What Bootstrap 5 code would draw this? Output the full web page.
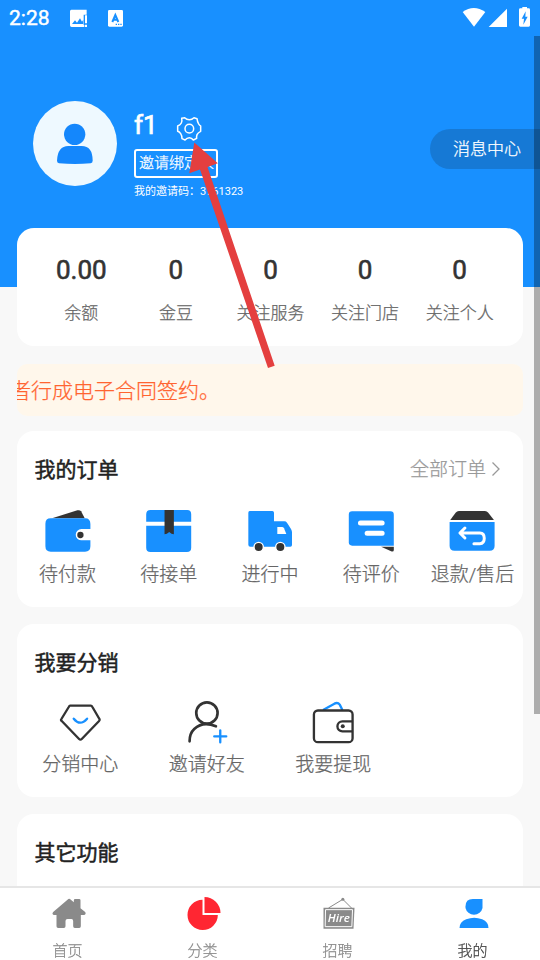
<!DOCTYPE html>
<html lang="zh-CN">
<head>
<meta charset="utf-8">
<meta name="viewport" content="width=device-width, initial-scale=1">
<title>我的</title>
<link href="https://cdn.jsdelivr.net/npm/bootstrap@5.3.0/dist/css/bootstrap.min.css" rel="stylesheet">
<style>
body{font-family:Roboto,"Noto Sans CJK SC",sans-serif;background:#f8f8f8;color:#666;font-weight:300;-webkit-text-stroke:.25px currentColor}
svg{display:block;flex:none}
.app{height:960px;width:540px}
.status{height:36px;padding:0 9px 0 9px;background:#1890ff;font-size:21px;font-weight:400;-webkit-text-stroke-width:.45px;line-height:38px}
.hero{height:251px;background:#1890ff;padding:65px 0 0 33px}
.who{margin-left:17px;padding-top:8px}
.nick{font-size:26px;line-height:32px;font-weight:400;-webkit-text-stroke-width:.7px;width:41.5px}
.gear{margin-top:7px}
.bind{width:84px;height:29px;border:2px solid #fff;border-radius:3px;font-size:15px;line-height:25px;margin-top:7px;padding-left:3px}
.code{font-size:11px;line-height:16px;margin-top:6px;font-weight:400;-webkit-text-stroke-width:0}
.msg{width:110px;height:40px;margin-top:28px;border-radius:20px 0 0 20px;background:rgba(20,60,100,.27);font-size:17px;line-height:41px;padding-left:23px}
.sheet{margin:0 17px;gap:17px}
.panel{background:#fff;border-radius:17px}
.stats{height:118px;margin-top:-59px;padding:24px 16px 0 17px}
.num{font-size:26px;line-height:36px;font-weight:400;-webkit-text-stroke-width:.6px;color:#333}
.cap{font-size:17px;line-height:24px;margin-top:13px}
.notice{height:52px;margin-top:1px;margin-bottom:-2px;border-radius:10px;background:#fff7eb;color:#ff6430;font-size:21px;line-height:54px;text-indent:-7px}
.orders{height:176px}
.share{height:173px}
.more{height:120px}
.ttl{font-size:21px;line-height:30px;font-weight:400;-webkit-text-stroke-width:.5px;color:#222}
.top-row{padding:24px 22px 0 17.5px}
.all{font-size:19px;line-height:30px;color:#999}
.icons-a{margin-top:20px}
.icons-a .lab{margin-top:10px}
.icons-b{margin-top:22px}
.icons-b .lab{margin-top:5px}
.lab{font-size:19px;line-height:24px}
.tabs{height:74px;border-top:2px solid #e6e6e6;font-size:15px;line-height:22px;color:#8a8a8a;padding-top:5px}
.tabs .lbl{margin-top:7px}
.tabs .on{color:#444}
.bar{right:0;top:36px;width:6px;height:678px;background:rgba(0,0,0,.3)}
</style>
</head>
<body>
<div class="app position-relative overflow-hidden d-flex flex-column">
  <header class="status d-flex align-items-center text-white flex-shrink-0">
    <span>2:28</span>
    <svg class="ms-3" width="24" height="20" viewBox="198 24 72 60"><path fill="#fff" d="M214 29h46v15h-9v31h2v6h-38q-5 0-5-5V34q0-5 4-5z"/><path fill="#1890ff" d="M216 72l9-11 6 7 9-13 6 10 4-6v13z"/><path fill="#fff" d="M255 46h6v24h-6zM255 74h6v7h-6z"/></svg>
    <svg class="ms-3" width="18" height="20" viewBox="306 24 54 60"><rect x="312" y="30" width="45" height="50" rx="4" fill="#fff"/><path d="M325 66l9-21 9 21M328 59h12" fill="none" stroke="#1890ff" stroke-width="6"/><path d="M335 73h4m3 0h4m3 0h4" stroke="#1890ff" stroke-width="4"/></svg>
    <svg class="ms-auto" width="69" height="24" viewBox="66 18 207 72"><g fill="#fff"><path d="M68 36Q101 12 136 36L102 80z"/><path d="M201 26v55h-55z"/><path d="M241 25h6v-4h14v4h5q4 0 4 4v47q0 4-4 4h-25q-4 0-4-4V29q0-4 4-4z"/></g><path fill="#1890ff" d="M257 34l-12 22h7l-2 18 13-24h-7z"/></svg>
  </header>

  <section class="hero d-flex align-items-start text-white flex-shrink-0">
    <svg width="84" height="85" viewBox="39 33 252 255"><ellipse cx="165" cy="160.500" rx="126" ry="127.500" fill="#eef9ff"/><g fill="#1487fc"><circle cx="164" cy="133" r="32"/><path d="M145 168h40q33 0 33 44 0 7-6 8-47 4-95 0-6-1-6-8 2-44 34-44z"/></g></svg>
    <div class="who">
      <div class="d-flex">
        <div class="nick">f1</div>
        <svg class="gear" width="26" height="26" viewBox="466 80 78 78" fill="none" stroke="#fff" stroke-width="4.500" stroke-linejoin="round"><path d="M483 87L492 85Q498 91 506 91Q514 91 520 85L529 88Q530 97 534 104Q537 109 540 110V126Q532 130 529 136Q527 142 528 147L518 152Q513 145 506 145Q499 145 493 152L484 148Q484 139 480 133Q476 127 471 126V110Q479 107 482 101Q485 95 483 87Z"/><circle cx="506" cy="118" r="13"/></svg>
      </div>
      <div class="bind text-nowrap">邀请绑定人</div>
      <div class="code">我的邀请码：3761323</div>
    </div>
    <div class="msg ms-auto">消息中心</div>
  </section>

  <main class="sheet d-flex flex-column flex-grow-1">
    <section class="panel stats d-flex text-center flex-shrink-0">
      <div class="col"><div class="num">0.00</div><div class="cap">余额</div></div>
      <div class="col"><div class="num">0</div><div class="cap">金豆</div></div>
      <div class="col"><div class="num">0</div><div class="cap">关注服务</div></div>
      <div class="col"><div class="num">0</div><div class="cap">关注门店</div></div>
      <div class="col"><div class="num">0</div><div class="cap">关注个人</div></div>
    </section>

    <div class="notice overflow-hidden text-nowrap flex-shrink-0">者行成电子合同签约。</div>

    <section class="panel orders flex-shrink-0">
      <div class="top-row d-flex justify-content-between">
        <div class="ttl">我的订单</div>
        <div class="all d-flex align-items-center">全部订单<svg width="15" height="20" viewBox="-3 1 15 20"><path d="M3.500 3.500l6.500 6.500-6.500 6.500" fill="none" stroke="#999" stroke-width="1.300"/></svg></div>
      </div>
      <div class="d-flex text-center icons-a">
        <div class="col d-flex flex-column align-items-center">
          <svg width="48" height="48" viewBox="130.800 225 144 144"><path fill="#333" d="M155 265l76-24q7-2 11 3l11 21z"/><path fill="#1890ff" d="M151 265h103q16 0 16 17v15h-27a17 17 0 0 0 0 34h27v18q0 16-16 16H151q-16 0-16-16v-68q0-16 16-16z"/><circle cx="240" cy="315" r="9.500" fill="#333"/></svg>
          <div class="lab">待付款</div></div>
        <div class="col d-flex flex-column align-items-center">
          <svg width="48" height="48" viewBox="434.400 225 144 144"><path fill="#1890ff" d="M451 240h110q12 0 12 13v22H438v-22q0-13 13-13zM438 287h135v66q0 13-13 13H451q-13 0-13-13z"/><path fill="#333" d="M493 240h28v73q-7 0-14-7-7 7-14 7z"/></svg>
          <div class="lab">待接单</div></div>
        <div class="col d-flex flex-column align-items-center">
          <svg width="48" height="48" viewBox="-72 225 144 144"><path fill="#1890ff" d="M-61 243H7q5 0 5 5v26h31q5 0 8 4l12 19q3 5 3 10v38q0 5-5 5H-59q-6 0-6-6v-96q0-5 4-5z"/><path fill="#fff" d="M22 291h14q4 0 6 4l7 17H22z"/><g fill="#333" stroke="#fff" stroke-width="4"><circle cx="-34" cy="351" r="14"/><circle cx="31" cy="351" r="14"/></g></svg>
          <div class="lab">进行中</div></div>
        <div class="col d-flex flex-column align-items-center">
          <svg width="48" height="48" viewBox="231.600 225 144 144"><path fill="#1890ff" d="M247 244h115q10 0 10 10v93H247q-10 0-10-10v-83q0-10 10-10z"/><path d="M272 279h65M292 310h45" stroke="#fff" stroke-width="15" stroke-linecap="round"/><path fill="#333" d="M334 350h38v10q0 6-8 4z"/></svg>
          <div class="lab">待评价</div></div>
        <div class="col d-flex flex-column align-items-center">
          <svg width="48" height="48" viewBox="535.200 225 144 144"><path fill="#333" d="M568 243h78q6 0 10 5l17 22H542l16-22q4-5 10-5z"/><path fill="#1890ff" d="M540 276h135v71q0 15-15 15H555q-15 0-15-15z"/><path d="M586 294l-15 15 15 15M573 309h58q13 0 13 16t-13 16h-18" fill="none" stroke="#fff" stroke-width="9" stroke-linecap="round" stroke-linejoin="round"/></svg>
          <div class="lab text-nowrap">退款/售后</div></div>
      </div>
    </section>

    <section class="panel share flex-shrink-0">
      <div class="top-row"><div class="ttl">我要分销</div></div>
      <div class="d-flex text-center icons-b">
        <div class="col-3 d-flex flex-column align-items-center">
          <svg width="48" height="48" viewBox="168.750 240 144 144" fill="none" stroke-linecap="round" stroke-linejoin="round"><path d="M211 257h62q3 0 5 4l21 36q2 3-1 6l-52 54q-4 4-8 0l-52-54q-4-3-1-6l22-36q2-4 4-4z" stroke="#333" stroke-width="7"/><path d="M222 296q19 24 40 0" stroke="#1890ff" stroke-width="7"/></svg>
          <div class="lab">分销中心</div></div>
        <div class="col-3 d-flex flex-column align-items-center">
          <svg width="48" height="48" viewBox="548.250 240 144 144" fill="none" stroke-width="8" stroke-linecap="round"><g stroke="#333"><ellipse cx="620" cy="279" rx="32" ry="32"/><path d="M568 364q0-24 14-37 26-25 65-8"/></g><path d="M642 349h36M660 331v36" stroke="#1890ff" stroke-width="7"/></svg>
          <div class="lab">邀请好友</div></div>
        <div class="col-3 d-flex flex-column align-items-center">
          <svg width="48" height="48" viewBox="117.750 240 144 144" fill="none" stroke-width="7"><path d="M160 270l34-19q10-5 16 3l8 16" stroke="#1890ff"/><g stroke="#333"><rect x="132.500" y="271.500" width="116" height="95" rx="12"/><path d="M248 304h-30a15 15 0 0 0 0 30h30"/></g><circle cx="219" cy="319" r="6" fill="#333"/></svg>
          <div class="lab">我要提现</div></div>
      </div>
    </section>

    <section class="panel more flex-shrink-0"><div class="top-row"><div class="ttl">其它功能</div></div></section>
  </main>

  <nav class="tabs fixed-bottom bg-white d-flex text-center">
    <div class="col d-flex flex-column align-items-center">
      <svg width="40" height="40" viewBox="142.500 279 120 120"><path fill="#8a8a8a" d="M201 299q5-5 10 0l9 8v-6q0-4 4-4h12q4 0 4 4v24l14 11q4 6-3 9h-10v34q0 5-5 5h-13q-5 0-5-5v-16q0-6-5-6h-12q-6 0-6 6v16q0 5-5 5h-17q-5 0-5-5v-34h-8q-7-3-2-9z"/></svg>
      <div class="lbl">首页</div></div>
    <div class="col d-flex flex-column align-items-center">
      <svg width="40" height="40" viewBox="547.500 279 120 120" fill="#ff2632"><path d="M606 299v46h46a45.500 45.500 0 1 1-46-46z"/><path d="M612 291a48 48 0 0 1 48 48h-48z"/></svg>
      <div class="lbl">分类</div></div>
    <div class="col d-flex flex-column align-items-center">
      <svg width="40" height="40" viewBox="142.500 279 120 120"><path d="M174 324l43-26 26 26" fill="none" stroke="#8a8a8a" stroke-width="3"/><circle cx="217" cy="298" r="4.500" fill="#8a8a8a"/><path fill="#8a8a8a" d="M159 323h93l-3 63h-90z"/><path d="M165 329h81l-2 51h-80z" fill="none" stroke="#fff" stroke-width="3"/><text x="205" y="367" text-anchor="middle" fill="#fff" stroke="none" font-family="Open Sans, sans-serif" font-size="33" font-style="italic" font-weight="600" textLength="66" lengthAdjust="spacingAndGlyphs">Hire</text></svg>
      <div class="lbl">招聘</div></div>
    <div class="col d-flex flex-column align-items-center">
      <svg width="40" height="40" viewBox="547.500 279 120 120" fill="#1890ff"><path d="M607 297h29v27a26 25 0 0 1-51 0v-5q0-22 22-22z"/><path d="M567 384q0-18 20-26 24-9 48 0 19 8 19 26z"/></svg>
      <div class="lbl on">我的</div></div>
  </nav>

  <div class="bar position-absolute"></div>
  <svg class="position-absolute top-0 start-0" width="540" height="400" viewBox="0 0 540 400"><path fill="#e43f3f" d="M194.300 142.500L217.800 163.300 207.500 167 274.700 365.700 268 368 200 169.500 189.300 173.300z"/></svg>
</div>
<script src="https://cdn.jsdelivr.net/npm/bootstrap@5.3.0/dist/js/bootstrap.bundle.min.js"></script>
</body>
</html>
